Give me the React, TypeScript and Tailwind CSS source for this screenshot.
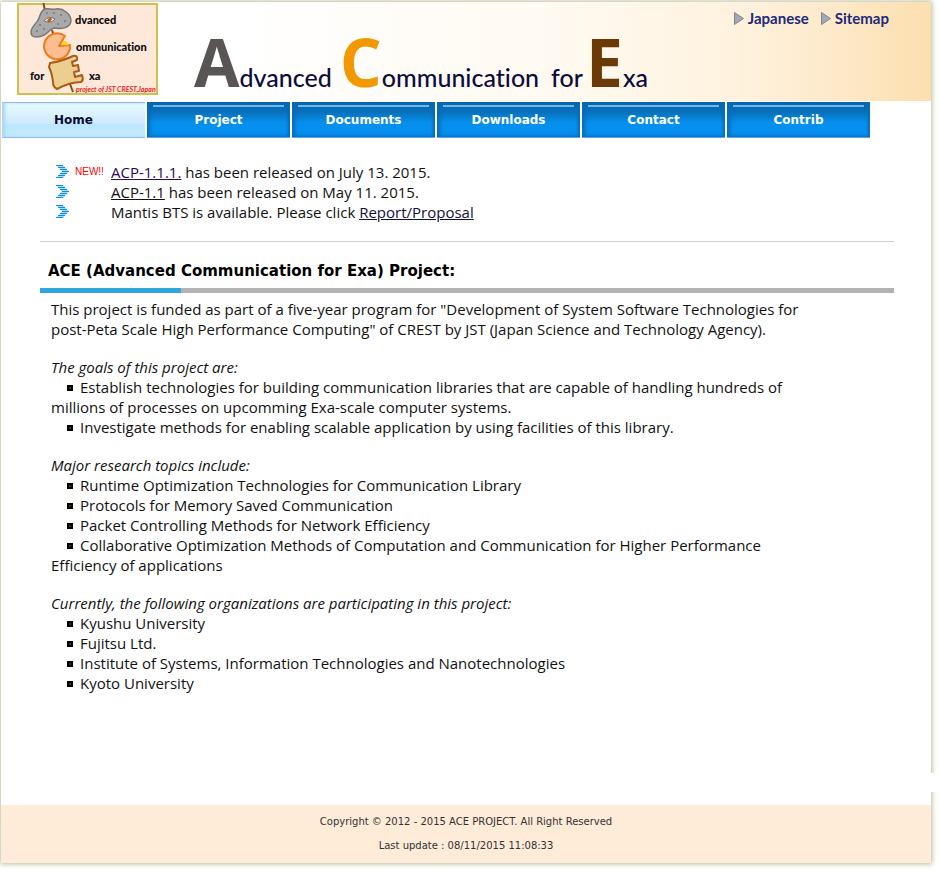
import React from "react";

const tabs = ["Home", "Project", "Documents", "Downloads", "Contact", "Contrib"];

function Emblem() {
  return (
    <svg
      viewBox="0 0 141 92"
      className="block h-[92px] w-[141px]"
      role="img"
      aria-label="Advanced Communication for Exa, project of JST CREST, Japan"
    >
      <rect x="1" y="1" width="139" height="90" fill="#fde8da" stroke="#cfc04a" strokeWidth="2" />
      <path d="M26.500 0 L28 8 M35 27 L37 33 M53 81 L56 89" stroke="#8a4a10" strokeWidth="2" fill="none" />
      <path
        d="M28 6 C31 5 35 7 39 6 C46 5 54 11 54 18 C53 26 43 26 37 25 C32 26 32 31 25 33 C18 35 14 34 14 29 C14 24 19 21 21 17 C23 14 23 8 28 6Z"
        fill="#a9a9a9"
        stroke="#777"
        strokeWidth="1.500"
      />
      <path d="M27 18 Q32 12 38 16 Q34 21 27 18Z" fill="#fde8da" stroke="#777" />
      <path d="M31 19 L34 15" stroke="#b5651d" strokeWidth="3" />
      <g fill="#444">
        <circle cx="30" cy="10" r=".7" /><circle cx="37" cy="10" r=".7" /><circle cx="44" cy="12" r=".7" />
        <circle cx="48" cy="18" r=".7" /><circle cx="41" cy="21" r=".7" /><circle cx="23" cy="22" r=".7" />
        <circle cx="20" cy="28" r=".7" /><circle cx="27" cy="26" r=".7" />
      </g>
      <path
        d="M48 33 A13 13 0 1 0 53 42 L42 43Z"
        fill="#fcbd91"
        stroke="#ee7a1c"
        strokeWidth="2"
        strokeLinejoin="round"
      />
      <path d="M46 38 L49 38 L52 42 L45 42Z" fill="#fcd21c" />
      <path
        d="M33 60 Q46 58 56 53 Q61 52 60 57 L55 59 L56 63 L61 62 L62 68 L57 69 L58 74 L65 72 Q67 77 64 79 Q53 79 40 86 Q36 84 36 79 Q35 70 32 64Z"
        fill="#eccf90"
        stroke="#a85c14"
        strokeWidth="2"
        strokeLinejoin="round"
      />
      <g fill="#0b0b0b" className="font-['Lato',sans-serif] text-[11px] font-black">
        <text x="58" y="21">dvanced</text>
        <text x="59" y="48">ommunication</text>
        <text x="13" y="77">for</text>
        <text x="72" y="77">xa</text>
      </g>
      <text x="59" y="89" fill="#ec1c1c" className="font-['Lato',sans-serif] text-[7px] font-bold italic">
        project of JST CREST,Japan
      </text>
    </svg>
  );
}

function TopLink({ children }: { children: React.ReactNode }) {
  return (
    <a href="#" className="flex items-center gap-1">
      <svg viewBox="0 0 10 13" className="h-[13px] w-[10px]" aria-hidden="true">
        <path d="M.500 .500 L9.500 6.500 L.500 12.500Z" fill="#a3a8b8" stroke="#85858c" />
      </svg>
      {children}
    </a>
  );
}

function Chevron() {
  return (
    <svg viewBox="0 0 13 14" className="h-[14px] w-[13px]" aria-hidden="true">
      <path
        d="M0 0h7v1h-7z M2 2h7v1h-7z M4 4h7v1h-7z M6 6h7v1h-7z M4 8h7v1h-7z M2 10h7v1h-7z M0 12h7v1h-7z"
        fill="#0f8fe0"
      />
      <path d="M0 0h7l6 6.500l-6 6.500h-7l6-6.500z" fill="#0f8fe0" opacity=".35" />
    </svg>
  );
}

function News({ isNew, children }: { isNew?: boolean; children: React.ReactNode }) {
  return (
    <li className="flex h-5 items-center">
      <Chevron />
      <span className="w-[42px] pl-[6px] font-['Liberation_Sans',Arial,sans-serif] text-[10px] text-[#f00]">
        {isNew ? "NEW!!" : ""}
      </span>
      <span>{children}</span>
    </li>
  );
}

function Topic({ title, items }: { title: string; items: string[] }) {
  return (
    <section>
      <h3 className="italic">{title}</h3>
      <ul>
        {items.map((item) => (
          <li key={item} className="indent-4">
            <span className="mr-[7px] inline-block size-[6px] border-2 border-black bg-[#333] align-[2px]" />
            {item}
          </li>
        ))}
      </ul>
    </section>
  );
}

export default function App() {
  return (
    <div className="bg-[#fffffd] pt-[2px] pr-[7px] pb-[9px] pl-px font-['Open_Sans',Verdana,sans-serif] text-[#111] [font-variant-ligatures:none]">
      <div className="relative bg-white shadow-[0_0_5px_1px_#b9b99c]">
        <header className="flex h-[99px] items-start bg-[linear-gradient(to_right,#fff_25%,#fffaf2_58%,#fff3e0_78%,#fde9c9_90%,#fddfaf)] pt-px pl-4">
          <Emblem />
          <h1 className="flex items-baseline pt-[18px] pl-[36px] font-['Lato',sans-serif] text-[25px] font-medium whitespace-nowrap text-[#0e0c3c]">
            <span className="font-['Open_Sans',sans-serif] text-[66px] leading-[80px] font-bold text-[#595554]">A</span>
            <span>dvanced</span>
            <span className="pl-2 font-['Open_Sans',sans-serif] text-[66px] leading-[80px] font-bold text-[#f39800]">C</span>
            <span>ommunication</span>
            <span className="pl-3">for</span>
            <span className="pl-[3px] font-['Open_Sans',sans-serif] text-[66px] leading-[80px] font-bold text-[#6a3906]">E</span>
            <span>xa</span>
          </h1>
          <div className="ml-auto flex gap-3 pt-1 pr-[42px] font-['Lato',sans-serif] text-[15px] font-bold text-[#1b2a7b]">
            <TopLink>Japanese</TopLink>
            <TopLink>Sitemap</TopLink>
          </div>
        </header>

        <nav className="flex gap-[2px] pt-px pl-px font-['DejaVu_Sans',Verdana,sans-serif] text-[12px] font-bold">
          {tabs.map((tab, i) => (
            <a
              key={tab}
              href="#"
              className={
                i === 0
                  ? "h-9 w-[143px] border-y border-[#8fbdf2] bg-[linear-gradient(#e6fcff,#cfe9ff_60%,#b9e6ff_62%,#c4ecff)] text-center leading-[34px] text-[#0b0b33] shadow-[inset_3px_0_3px_#a9d6fa]"
                  : "h-9 w-[143px] border-b border-[#5aa5f0] bg-[linear-gradient(#0763a8,#0872be_30%,#0590ef_60%)] px-[6px] pt-[3px] text-center text-white shadow-[inset_3px_0_4px_#0a6ab5,inset_-2px_0_3px_#0a6ab5]"
              }
            >
              {i === 0 ? tab : <span className="block border-t-2 border-[#6db9ee] leading-[26px]">{tab}</span>}
            </a>
          ))}
        </nav>

        <main className="pt-[24px] pr-[37px] pb-[112px] pl-[39px] text-[15px] leading-5">
          <ul className="pl-4">
            <News isNew>
              <a href="#" className="text-[#2a0a55] underline">ACP-1.1.1.</a> has been released on July 13. 2015.
            </News>
            <News>
              <a href="#" className="underline">ACP-1.1</a> has been released on May 11. 2015.
            </News>
            <News>
              Mantis BTS is available. Please click{" "}
              <a href="#" className="text-[#101040] underline">Report/Proposal</a>
            </News>
          </ul>
          <hr className="mt-[19px] border-[#d2d2d2]" />
          <h2 className="mt-[19px] pl-2 font-['DejaVu_Sans',Verdana,sans-serif] text-[15px] font-bold text-black">ACE (Advanced Communication for Exa) Project:</h2>
          <div className="mt-[7px] h-[5px] bg-[#b3b3b3]">
            <div className="h-full w-[141px] bg-[#2ea7e0]" />
          </div>
          <div className="mt-[6px] flex max-w-[772px] flex-col gap-[18px] px-[11px]">
            <p>
              This project is funded as part of a five-year program for "Development of System Software Technologies for
              post-Peta Scale High Performance Computing" of CREST by JST (Japan Science and Technology Agency).
            </p>
            <Topic
              title="The goals of this project are:"
              items={[
                "Establish technologies for building communication libraries that are capable of handling hundreds of millions of processes on upcomming Exa-scale computer systems.",
                "Investigate methods for enabling scalable application by using facilities of this library.",
              ]}
            />
            <Topic
              title="Major research topics include:"
              items={[
                "Runtime Optimization Technologies for Communication Library",
                "Protocols for Memory Saved Communication",
                "Packet Controlling Methods for Network Efficiency",
                "Collaborative Optimization Methods of Computation and Communication for Higher Performance Efficiency of applications",
              ]}
            />
            <Topic
              title="Currently, the following organizations are participating in this project:"
              items={[
                "Kyushu University",
                "Fujitsu Ltd.",
                "Institute of Systems, Information Technologies and Nanotechnologies",
                "Kyoto University",
              ]}
            />
          </div>
        </main>

        <footer className="bg-[#feebd8] py-[5px] text-center font-['DejaVu_Sans',Verdana,sans-serif] text-[10px] leading-6 text-[#333]">
          <p>Copyright © 2012 - 2015 ACE PROJECT. All Right Reserved</p>
          <p>Last update : 08/11/2015 11:08:33</p>
        </footer>
        <div className="absolute -right-[7px] bottom-[71px] h-[19px] w-[7px] bg-white" />
      </div>
    </div>
  );
}
